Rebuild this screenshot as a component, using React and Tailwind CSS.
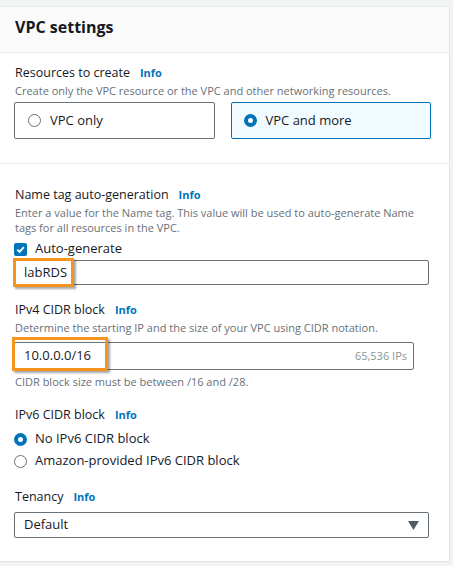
import React from 'react';

const font = { fontFamily: '"Open Sans", "Noto Sans", sans-serif' };

function Info() {
    return <span className="ml-[10px] text-[11px] font-bold text-[#0073bb]">Info</span>;
}

function Radio({ checked }) {
    return checked ? (
        <span className="w-[13px] h-[13px] rounded-full border-[4px] border-[#0073bb] bg-white shrink-0" />
    ) : (
        <span className="w-[13px] h-[13px] rounded-full border border-[#687078] bg-white shrink-0" />
    );
}

function Highlight({ className }) {
    return (
        <div className={`absolute border-[3px] border-[#f7941d] shadow-[2px_2px_2px_rgba(0,0,0,0.35)] pointer-events-none ${className}`} />
    );
}

export default function App() {
    return (
        <div className="w-[453px] h-[566px] bg-[#f2f3f3] pt-[6px] pr-[3px] overflow-hidden" style={font}>
            <div className="bg-white border-r border-b border-[#e4e7e7] h-[556px]">
                {/* Header */}
                <div className="h-[47px] bg-[#fafafa] border-b border-t border-[#eaeded] px-[15px] pb-[6px] flex items-center">
                    <h2 className="text-[16px] font-bold text-[#16191f]">VPC settings</h2>
                </div>

                {/* Resources to create */}
                <div className="px-[14px] pt-[10px] pb-[24px] border-b border-[#eaeded]">
                    <div className="flex items-center h-[20px] pl-[1px] text-[12.5px] text-[#16191f]">
                        Resources to create <Info />
                    </div>
                    <p className="h-[16px] leading-[16px] pl-[1px] text-[11px] text-[#687078]">
                        Create only the VPC resource or the VPC and other networking resources.
                    </p>
                    <div className="mt-[3px] grid grid-cols-2 gap-[16px] pr-[4px]">
                        <div className="h-[37px] border border-[#687078] rounded-[2px] flex items-center gap-[9px] px-[13px] text-[13px] text-[#16191f]">
                            <Radio /> VPC only
                        </div>
                        <div className="h-[37px] border border-[#0073bb] bg-[#f1faff] rounded-[2px] flex items-center gap-[9px] px-[12px] text-[13px] text-[#16191f]">
                            <Radio checked /> VPC and more
                        </div>
                    </div>
                </div>

                {/* Name tag */}
                <div className="px-[14px] pt-[21px]">
                    <div className="flex items-center h-[20px] pl-[1px] text-[12.5px] text-[#16191f]">
                        Name tag auto-generation <Info />
                    </div>
                    <p className="leading-[15px] pl-[1px] text-[11px] text-[#687078]">
                        Enter a value for the Name tag. This value will be used to auto-generate Name tags for all resources in the VPC.
                    </p>
                    <label className="flex items-center gap-[8px] h-[20px] mt-[4px] text-[13px] text-[#16191f]">
                        <span className="w-[13px] h-[13px] rounded-[2px] bg-[#0073bb] flex items-center justify-center shrink-0">
                            <svg viewBox="0 0 12 12" className="w-[11px] h-[11px]">
                                <path d="M2.5 6.2 L5 8.6 L9.6 3.4" fill="none" stroke="white" strokeWidth="2" />
                            </svg>
                        </span>
                        Auto-generate
                    </label>
                    <div className="relative mt-[1px] mr-[6px]">
                        <div className="h-[25px] border border-[#687078] rounded-[2px] flex items-center pl-[9px] text-[13px] text-[#16191f]">
                            labRDS
                        </div>
                        <Highlight className="-left-[1px] -top-[2px] w-[61px] h-[29px]" />
                    </div>

                    {/* IPv4 */}
                    <div className="flex items-center h-[20px] mt-[15px] pl-[1px] text-[12.5px] text-[#16191f]">
                        IPv4 CIDR block <Info />
                    </div>
                    <p className="h-[16px] leading-[16px] pl-[1px] text-[11px] text-[#687078]">
                        Determine the starting IP and the size of your VPC using CIDR notation.
                    </p>
                    <div className="relative mt-[6px] mr-[21px]">
                        <div className="h-[28px] border border-[#687078] rounded-[2px] flex items-center justify-between pl-[9px] pr-[6px] text-[13px] text-[#16191f]">
                            <span>10.0.0.0/16</span>
                            <span className="text-[11px] text-[#879596]">65,536 IPs</span>
                        </div>
                        <Highlight className="-left-[2px] -top-[5px] w-[96px] h-[34px]" />
                    </div>
                    <p className="mt-[4px] h-[16px] leading-[16px] pl-[1px] text-[11px] text-[#687078]">
                        CIDR block size must be between /16 and /28.
                    </p>

                    {/* IPv6 */}
                    <div className="flex items-center h-[20px] mt-[15px] pl-[1px] text-[12.5px] text-[#16191f]">
                        IPv6 CIDR block <Info />
                    </div>
                    <div className="mt-[4px] flex flex-col gap-[2px]">
                        <div className="flex items-center gap-[8px] h-[20px] text-[13px] text-[#16191f]">
                            <Radio checked /> No IPv6 CIDR block
                        </div>
                        <div className="flex items-center gap-[8px] h-[20px] text-[13px] text-[#16191f]">
                            <Radio /> Amazon-provided IPv6 CIDR block
                        </div>
                    </div>

                    {/* Tenancy */}
                    <div className="flex items-center h-[20px] mt-[16px] pl-[1px] text-[12.5px] text-[#16191f]">
                        Tenancy <Info />
                    </div>
                    <div className="mt-[5px] mr-[6px] h-[26px] border border-[#687078] rounded-[2px] flex items-center justify-between pl-[9px] pr-[9px] text-[13px] text-[#16191f]">
                        <span>Default</span>
                        <svg viewBox="0 0 10 8" className="w-[11px] h-[9px]">
                            <path d="M0 0 H10 L5 8 Z" fill="#545b64" />
                        </svg>
                    </div>
                </div>
            </div>
        </div>
    );
}
